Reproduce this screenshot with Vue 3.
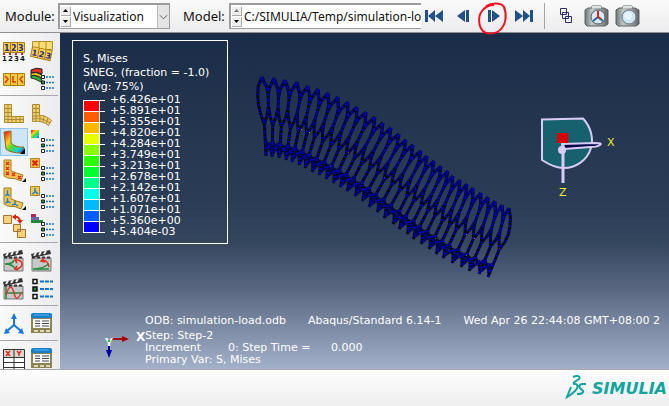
<script setup>
import { ref } from 'vue'

const moduleName = ref('Visualization')
const model = ref('C:/SIMULIA/Temp/simulation-load.odb')

const bands = [
  '#ff0000', '#ff5d00', '#ffb900', '#e8ff00', '#8bff00', '#2eff00',
  '#00ff2e', '#00ff8b', '#00ffe8', '#00b9ff', '#005dff', '#0000ff',
]
const levels = [
  '+6.426e+01', '+5.891e+01', '+5.355e+01', '+4.820e+01', '+4.284e+01',
  '+3.749e+01', '+3.213e+01', '+2.678e+01', '+2.142e+01', '+1.607e+01',
  '+1.071e+01', '+5.360e+00', '+5.404e-03',
]

const groups = [
  [
    ['plot-labels', 'Element labels'], ['plot-labels-def', 'Deformed labels'],
    ['plot-symbols', 'Orientation labels'], ['contour-layers', 'Ply stack options'],
  ],
  [
    ['undeformed', 'Plot undeformed shape'], ['deformed', 'Plot deformed shape'],
    ['contours', 'Plot contours'], ['contour-options', 'Contour options'],
    ['symbols', 'Plot symbols'], ['symbol-options', 'Symbol options'],
    ['orient', 'Plot material orientations'], ['orient-options', 'Orientation options'],
    ['multi', 'Allow multiple plot states'], ['superimpose', 'Superimpose options'],
  ],
  [
    ['anim-scale', 'Animate scale factor'], ['anim-time', 'Animate time history'],
    ['anim-harmonic', 'Animate harmonic'], ['anim-options', 'Animation options'],
  ],
  [['csys', 'Create coordinate system'], ['csys-manager', 'Coordinate system manager']],
  [['xy', 'Create XY data'], ['xy-manager', 'XY data manager']],
]

/* Crown and foot of every strut ring, in canvas pixels. */
const crown = [
  [262, 77], [274, 78], [285, 80], [297, 82], [308, 86], [318, 89], [328, 93], [338, 97],
  [348, 102], [357, 107], [366, 112], [375, 117], [383, 123], [391, 128], [399, 134],
  [406, 140], [413, 145], [421, 151], [427, 156], [434, 161], [441, 166], [448, 171],
  [453, 176], [460, 180], [467, 184], [473, 188], [481, 193], [488, 197], [495, 201],
  [502, 205], [509, 208],
]
const foot = [
  [266, 156], [272, 157], [279, 158], [286, 160], [292, 162], [299, 165], [305, 168],
  [312, 172], [319, 175], [326, 179], [333, 183], [340, 187], [347, 191], [355, 196],
  [362, 201], [369, 207], [377, 212], [384, 218], [393, 224], [399, 229], [407, 234],
  [413, 239], [421, 244], [429, 249], [436, 254], [443, 258], [452, 263], [461, 267],
  [469, 271], [479, 274], [488, 277],
]
const last = crown.length - 1

function along(list, u) {
  const i = Math.max(0, Math.min(last - 1, Math.floor(u)))
  const t = u - i
  return [0, 1].map((k) => list[i][k] + (list[i + 1][k] - list[i][k]) * t)
}
function at(u, s) {
  const a = along(crown, u)
  const b = along(foot, u)
  const bulge = 3 * Math.sin(Math.PI * s) * Math.pow(Math.max(u, 0) / last, 6)
  const x = a[0] + (b[0] - a[0]) * s + bulge - 60
  const y = a[1] + (b[1] - a[1]) * s - 33
  return `${x.toFixed(1)} ${y.toFixed(1)}`
}
/* Honeycomb: a tall leaf under each crown, a straight strut below it, zigzags at the foot. */
const leaf = [[0, 0], [0.38, 0.12], [0.5, 0.24], [0.5, 0.36], [0.34, 0.48], [0, 0.6]]
const struts = crown
  .map((_, i) => [-1, 1]
    .map((side) => 'M' + leaf.map(([w, s]) => at(i + side * w, s)).join('L'))
    .join('') + `L${at(i, 1)}`)
  .join('')
const links = crown
  .slice(0, -1)
  .map((_, i) => `M${at(i, 0.02)}L${at(i + 0.5, 0.16)}L${at(i + 1, 0.02)}M${at(i, 0.97)}L${at(i + 0.5, 0.84)}L${at(i + 1, 0.97)}M${at(i, 0.8)}L${at(i + 0.5, 0.88)}L${at(i + 1, 0.8)}`)
  .join('')
const mesh = struts + links
const specks = [
  [208, 89, '#0a8a70'], [216, 90, '#0a7a3a'], [241, 96, '#b88a20'], [249, 99, '#b0a030'],
  [288, 119, '#a04020'], [270, 132, '#0a7a20'], [324, 144, '#108020'], [364, 174, '#108a20'],
  [378, 184, '#208a20'], [393, 192, '#309020'], [406, 201, '#10b0b0'], [414, 205, '#c08010'],
  [375, 205, '#20a020'], [406, 222, '#30a020'], [439, 215, '#a02020'],
]
</script>

<template>
  <div class="app">
    <svg class="defs" aria-hidden="true">
      <defs>
        <linearGradient id="rainbow" x1="0" y1="0" x2="1" y2="1">
          <stop offset="0.05" stop-color="#f02010" />
          <stop offset="0.35" stop-color="#ffd020" />
          <stop offset="0.55" stop-color="#50d830" />
          <stop offset="0.78" stop-color="#20d0d0" />
          <stop offset="1" stop-color="#1050f0" />
        </linearGradient>
        <linearGradient id="camera" x1="0" y1="0" x2="1" y2="0">
          <stop offset="0" stop-color="#6f7678" />
          <stop offset="0.3" stop-color="#c2c7c8" />
          <stop offset="0.7" stop-color="#9aa0a2" />
          <stop offset="1" stop-color="#5b6264" />
        </linearGradient>
        <g id="opts">
          <g stroke="#222" fill="#fff"><path d="M11.500 8.500h3v3h-3zM11.500 19.500h3v3h-3z" /><path d="M11.500 14h3v3h-3z" fill="#2a9a3a" /></g>
          <path d="M16 10h8M16 15.500h8M16 21h8" stroke="#1878d8" stroke-width="1.500" stroke-dasharray="2 1" />
        </g>
        <g id="clap">
          <path d="M2 9h19v13H2z" fill="#c6c9c9" stroke="#777" />
          <path d="M1 5l19-4 1 4-19 4z" fill="#333" />
          <path d="M4 7l2-3M9 6l2-3M14 5l2-3" stroke="#eee" stroke-width="2" />
          <path d="M2 8.500h19" stroke="#333" stroke-width="2" stroke-dasharray="3 2" />
        </g>
        <g id="elbow">
          <path d="M2 2h7v11q5 2 12 4l-2 6q-5-3-13-3l-4-2z" fill="#f7c850" stroke="#a07818" />
        </g>
        <g id="table">
          <path d="M1 3q0-1 1-1h19q1 0 1 1v18H1z" fill="#8c8355" />
          <path d="M1 6V3q0-2 2-2h17q2 0 2 2v3z" fill="#1780cc" />
          <path d="M4 3h15" stroke="#5bb0e8" />
          <path d="M3 7h17v9H3z" fill="#fff" />
          <path d="M5 9h5M12 9h7M5 11.500h5M12 11.500h7M5 14h5M12 14h7" stroke="#444" />
          <path d="M4 18h4v2H4zM10 18h4v2h-4zM16 18h4v2h-4z" fill="#ddd8b8" />
        </g>
        <g id="cam">
          <path d="M4 3h4v-2h9v2h3l4 2v14l-3 2H3l-2-2V5z" fill="url(#camera)" stroke="#5b6264" />
          <path d="M8 2h9" stroke="#dfe3e4" stroke-width="2" />
        </g>
      </defs>
    </svg>

    <header class="toolbar">
      <label class="caption" for="module">Module:</label>
      <div class="combo module">
        <span class="spin">
          <button type="button" aria-label="Previous module"><svg viewBox="0 0 7 4"><path d="M0 4L3.500 0 7 4z" /></svg></button>
          <button type="button" aria-label="Next module"><svg viewBox="0 0 7 4"><path d="M0 0h7L3.500 4z" /></svg></button>
        </span>
        <select id="module" v-model="moduleName"><option>Visualization</option></select>
        <span class="drop"><svg viewBox="0 0 10 6"><path d="M1 1l4 4 4-4" fill="none" stroke="#555" /></svg></span>
      </div>
      <label class="caption second" for="model">Model:</label>
      <div class="combo model">
        <span class="spin">
          <button type="button" aria-label="Previous model"><svg viewBox="0 0 7 4"><path d="M0 4L3.500 0 7 4z" fill="#777" /></svg></button>
          <button type="button" aria-label="Next model"><svg viewBox="0 0 7 4"><path d="M0 0h7L3.500 4z" /></svg></button>
        </span>
        <select id="model" v-model="model"><option>C:/SIMULIA/Temp/simulation-load.odb</option></select>
      </div>

      <nav class="playback" aria-label="Frames">
        <button type="button" aria-label="First frame"><svg width="18" height="12"><path d="M0 0h3v12H0zM3 6l7-6v12zM10 6l8-6v12z" /></svg></button>
        <button type="button" aria-label="Previous frame"><svg width="18" height="12"><path d="M2 6l8-6v12zM11 0h3v12h-3z" /></svg></button>
        <button type="button" class="marked" aria-label="Next frame">
          <svg width="18" height="12"><path d="M3 0h3v12H3zM7 0l8 6-8 6z" /></svg>
          <svg class="ring" width="32" height="36" viewBox="0 0 32 36"><path d="M9 5C14 2 24 1 27 6c3 7 2 17-3 22-4 5-14 6-18 2C1 25 1 15 5 10c3-4 7-6 12-6" /></svg>
        </button>
        <button type="button" aria-label="Last frame"><svg width="18" height="12"><path d="M0 0l8 6-8 6zM8 0l7 6-7 6zM15 0h3v12h-3z" /></svg></button>
      </nav>

      <div class="tools">
        <button type="button" aria-label="Overlay viewports">
          <svg width="12" height="16" fill="none" stroke="#2b2b6e"><path d="M.5.5h6v6h-6zM2.500 4.500h6v6h-6zM5.500 8.500h6v6h-6z" /></svg>
        </button>
        <button type="button" aria-label="Save view">
          <svg width="25" height="22"><use href="#cam" /><circle cx="14" cy="12" r="7" fill="#dce9f4" stroke="#4e5a62" /><path d="M14 12l-5 4M14 12l5 4" stroke="#2864b0" stroke-width="2" /><path d="M14 6v6l3 2" fill="none" stroke="#c82828" stroke-width="2" /></svg>
        </button>
        <button type="button" aria-label="Snapshot">
          <svg width="25" height="22"><use href="#cam" /><circle cx="14" cy="12" r="7" fill="#cfe4f6" stroke="#6a767c" /><circle cx="13" cy="11" r="4" fill="#e6f3fd" /></svg>
        </button>
      </div>
    </header>

    <div class="work">
      <aside class="toolbox">
        <div v-for="(group, g) in groups" :key="g" class="group">
          <button v-for="[icon, title] in group" :key="icon" type="button" :aria-label="title" :class="{ active: icon === 'contours' }">
            <svg width="24" height="24" fill="none">
              <template v-if="icon === 'plot-labels'">
                <path d="M1.500 3.500h21v10h-21zM8.500 3.500v10M15.500 3.500v10" fill="#f9d04c" stroke="#a87c18" />
                <g class="num"><text x="2" y="12">1</text><text x="9" y="12">2</text><text x="16" y="12">3</text></g>
                <path d="M1 15h22" stroke="#e02020" stroke-dasharray="2 4" stroke-width="2" />
                <g class="tiny"><text x="0" y="22">1</text><text x="6" y="22">2</text><text x="12" y="22">3</text><text x="18" y="22">4</text></g>
              </template>
              <template v-else-if="icon === 'plot-labels-def'">
                <path d="M2.500 2.500h20v8h-20zM9 2v9M16 2v9" fill="#f7dc70" stroke="#b09028" />
                <g transform="rotate(12 2 8)"><path d="M2.500 7.500h20v10h-20zM9.500 7.500v10M16.500 7.500v10" fill="#f9d04c" stroke="#a87c18" /><g class="num"><text x="3" y="16">1</text><text x="10" y="16">2</text><text x="17" y="16">3</text></g></g>
              </template>
              <template v-else-if="icon === 'plot-symbols'">
                <path d="M1.500 6.500h21v12h-21zM8.500 6.500v12M15.500 6.500v12" fill="#f9cc40" stroke="#a87c18" />
                <path d="M3 9l3 3-3 4M11 9v6h3M21 9l-3 3 3 4" stroke="#d83818" stroke-width="1.500" />
              </template>
              <template v-else-if="icon === 'contour-layers'">
                <path d="M1 9q5-2 11 4l-1 2q-7-4-10-4z" fill="#38b838" stroke="#222" />
                <path d="M1 6q5-2 11 2v3q-7-4-11-2z" fill="#f0c820" stroke="#222" />
                <path d="M1 3q5-3 11-1v5q-6-3-11-1z" fill="#e03020" stroke="#222" />
                <use href="#opts" />
              </template>
              <path v-else-if="icon === 'undeformed'" d="M2.500 2.500h7v12h12v6h-19zM6 3v17M3 6.500h6M3 10.500h6M3 14.500h6M3 17.500h18M10 15v5M14 15v5M18 15v5" fill="#f3d068" stroke="#a88a38" />
              <path v-else-if="icon === 'deformed'" d="M2.500 2.500h7v11q5-1 12 5l-3 5q-5-5-16-4zM6 3v16M3 6.500h6M3 10.500h6M3 14h7M3 17q9-2 17 4M10 14v5M14 14l-1 6M18 16l-2 6" fill="#f3d068" stroke="#a88a38" />
              <g v-else-if="icon === 'contours'">
                <path d="M2 2l7-1v12q5 5 13 4l-2 6Q8 23 4 19z" fill="url(#rainbow)" stroke="#8a6a20" />
                <path d="M23 18v6h-5z" fill="#111" />
              </g>
              <g v-else-if="icon === 'contour-options'"><path d="M1 0h8v8H1z" fill="url(#rainbow)" /><use href="#opts" /></g>
              <g v-else-if="icon === 'symbols'">
                <use href="#elbow" />
                <path d="M4 4l3 3M7 4L4 7M4 9l3 3M7 9l-3 3M4 14l3 3M7 14l-3 3M10 15l3 3M13 15l-3 3M16 18l3 3M19 18l-3 3" stroke="#e02818" stroke-width="1.500" />
                <path d="M24 20v4h-4z" fill="#111" />
              </g>
              <g v-else-if="icon === 'symbol-options'"><path d="M.5.5h9v9h-9z" fill="#f7c040" stroke="#b08428" /><path d="M2.500 2.500l5 5M7.500 2.500l-5 5" stroke="#e02010" stroke-width="2" /><use href="#opts" /></g>
              <g v-else-if="icon === 'orient'">
                <use href="#elbow" />
                <path d="M5.500 4v4l-2 2M5.500 8l2 2M5.500 12v4l-2 1M5.500 15l3 2M13 15v3l-3 1M13 18l3 2" stroke="#1880d8" stroke-width="1.500" />
                <path d="M24 20v4h-4z" fill="#111" />
              </g>
              <g v-else-if="icon === 'orient-options'"><path d="M.5.500h9v9h-9z" fill="#f7c850" stroke="#b08428" /><path d="M5 2v4L2 8M5 5l3 3" stroke="#1880d8" stroke-width="1.500" /><use href="#opts" /></g>
              <g v-else-if="icon === 'multi'">
                <path d="M1.500 1.500h8v8h-8zM11.500 10.500h7v7h-7zM15.500 15.500h8v8h-8z" fill="#fbd27a" stroke="#9a7430" />
                <path d="M12 3q5-1 6 4" stroke="#e02010" stroke-width="2" /><path d="M10 3l4-3v6zM15 6h6l-3 4z" fill="#e02010" />
              </g>
              <g v-else-if="icon === 'superimpose'">
                <path d="M1 0h5v3H1z" fill="#c02058" /><path d="M1 3h8v3H1z" fill="#6868a8" /><path d="M1 6h12v3H1z" fill="#208838" /><use href="#opts" />
              </g>
              <g v-else-if="icon === 'anim-scale'"><use href="#clap" /><path d="M3 15q8 0 9-4M3 15q8 0 10 5" stroke="#208838" stroke-width="1.500" /><path d="M14 11q6 0 6 4t-6 5M15 9l-2 2 2 3M15 17l-2 3 3 1" stroke="#e03020" stroke-width="1.500" /></g>
              <g v-else-if="icon === 'anim-time'"><use href="#clap" /><path d="M3 20q9 0 16-5M3 20h16" stroke="#208838" stroke-width="1.500" /><path d="M11 12q7-2 8 6M14 9l-3 3 4 1" stroke="#e03020" stroke-width="1.500" /></g>
              <g v-else-if="icon === 'anim-harmonic'"><use href="#clap" /><path d="M4 10v12M3 16h18" stroke="#208838" stroke-width="1.500" /><path d="M4 18c3-10 6-10 8-2s4 6 8-1" stroke="#d83830" stroke-width="1.500" /></g>
              <g v-else-if="icon === 'anim-options'">
                <path d="M3 2.500h4v4H3zM3 17.500h4v4H3z" fill="#fff" stroke="#111" stroke-width="1.500" /><path d="M3 10h4v4H3z" fill="#208a28" stroke="#111" stroke-width="1.500" />
                <path d="M10 4.500h13M10 12h13M10 19.500h13" stroke="#1070e0" stroke-width="2" stroke-dasharray="4 1" />
              </g>
              <g v-else-if="icon === 'csys'"><path d="M12 13V5M12 13l-7 6M12 13l7 6" stroke="#1878e0" stroke-width="2" /><path d="M12 1l3 6H9zM2 22l2-6 4 5zM22 22l-6-1 4-5z" fill="#1878e0" /></g>
              <g v-else-if="icon === 'xy'">
                <path d="M1.500 2.500h21V24h-21z" fill="#fff" stroke="#333" /><path d="M2 3h20v7H2z" fill="#d8d8d0" />
                <path d="M12 2v22M1 10.500h22M1 15.500h22M1 20.500h22" stroke="#333" />
                <path d="M4 4l4 5M8 4L4 9M15 4l2 2.500L19 4M17 6v3" stroke="#e02820" stroke-width="1.500" />
              </g>
              <use v-else href="#table" />
            </svg>
          </button>
        </div>
      </aside>

      <main class="viewport">
        <svg class="model-view" width="609" height="336" fill="none">
          <path :d="mesh" stroke="#06061c" stroke-width="3" stroke-linejoin="round" />
          <path :d="mesh" stroke="#0000b4" stroke-width="2" stroke-dasharray="2 1 1 2 2 3" />
          <rect v-for="([x, y, c], i) in specks" :key="i" :x="x" :y="y" width="1" height="1" :fill="c" />
        </svg>

        <svg class="compass" width="76" height="86" fill="none">
          <path d="M2 7.500L43 6.500C50 14 54 25 51 36C47 49 35 56 24 56C15 56 8 52 2 48Z" fill="#17616f" stroke="#d8ccf4" stroke-width="2" />
          <path d="M22 32L55 31Q63 31 60 33Q57 35 50 35L24 37Z" fill="#04044a" stroke="#d8ccf4" stroke-width="2" stroke-linejoin="round" />
          <path d="M23 31v40" stroke="#d8ccf4" stroke-width="3" />
          <path d="M17 21h11v10H17z" fill="#d60000" />
          <circle cx="22" cy="38" r="4" fill="#d8ccf4" />
          <text x="67" y="34">X</text><text x="19" y="84">Z</text>
        </svg>

        <section class="legend">
          <p>S, Mises</p>
          <p>SNEG, (fraction = -1.0)</p>
          <p>(Avg: 75%)</p>
          <div class="scale">
            <div class="bands"><span v-for="c in bands" :key="c" :style="{ '--band': c }"></span></div>
            <ul><li v-for="l in levels" :key="l">{{ l }}</li></ul>
          </div>
        </section>

        <section class="status">
          <svg class="triad" width="50" height="30" fill="none">
            <path d="M7 10h14" stroke="#a01010" stroke-width="2" /><path d="M19 7l7 3-7 3z" fill="#a80000" />
            <path d="M6 15v8" stroke="#0000a0" stroke-width="2" /><path d="M3 21h6l-3 8z" fill="#0000a0" />
            <text class="y" x="2" y="17">Y</text>
            <path d="M5 11h2v2H5z" fill="#10c030" />
            <text x="33" y="12">X</text>
          </svg>
          <div class="lines">
            <p class="source"><span>ODB: simulation-load.odb</span><span>Abaqus/Standard 6.14-1</span><span>Wed Apr 26 22:44:08 GMT+08:00 2</span></p>
            <p>Step: Step-2</p>
            <p class="inc"><span>Increment</span><span>0: Step Time =</span><span>0.000</span></p>
            <p>Primary Var: S, Mises</p>
          </div>
        </section>
      </main>
    </div>

    <footer class="brand">
      <svg width="22" height="24" viewBox="0 0 22 24" fill="none" stroke="#12a4a0" stroke-width="2">
        <path d="M8 2C12 0 16 1 14 4L8 8M8 9C13 8 14 12 10 16Q6 20 2 22L6 12M21 9H17Q13 10 15 13L18 16Q19 19 12 19" />
      </svg>
      <span>SIMULIA</span>
    </footer>
  </div>
</template>

<style>
body { background: #f4f4f5; }
</style>

<style scoped>
.app { display: flex; flex-direction: column; height: 100vh; overflow: hidden; font: 13px/20px "Noto Sans", sans-serif; color: #111; }
.defs { position: absolute; width: 0; height: 0; }
button { display: flex; align-items: center; justify-content: center; border: 0; padding: 0; background: none; }
p, ul { margin: 0; padding: 0; list-style: none; }

.toolbar { display: flex; align-items: center; flex: none; height: 33px; box-sizing: border-box; padding-left: 5px; background: linear-gradient(#fafafa, #ececee); border-bottom: 1px solid #8e8e92; }
.caption { flex: none; width: 53px; }
.caption.second { width: 46px; margin-left: 13px; }
.combo { display: flex; align-items: center; flex: none; box-sizing: border-box; height: 26px; border: 2px solid #9c9c9e; border-width: 2px 1px 1px 2px; background: #fff; overflow: hidden; }
.combo.module { width: 112px; }
.combo.model { width: 192px; border-right: 0; }
.combo select { flex: 1; min-width: 0; height: 22px; appearance: none; border: 0; padding: 0 0 0 2px; background: none; font: 12px/20px "Noto Sans", sans-serif; color: #111; text-overflow: clip; }
.spin { display: flex; flex-direction: column; flex: none; gap: 1px; width: 10px; height: 20px; margin-left: 1px; }
.spin button { flex: 1; box-sizing: border-box; background: #eee; border: 1px solid #aaa; border-width: 0 1px 1px 0; }
.spin svg { width: 5px; height: 3px; }
.drop { display: flex; align-items: center; justify-content: center; width: 11px; height: 23px; background: #e4e4e4; border-left: 1px solid #bbb; pointer-events: none; }
.drop svg { width: 9px; height: 6px; }
.playback { display: flex; gap: 12px; margin-left: 4px; }
.playback svg { fill: #245089; }
.playback button { position: relative; width: 18px; height: 24px; }
.playback .ring { position: absolute; left: -8px; top: -3px; fill: none; stroke: #f01020; stroke-width: 2; pointer-events: none; z-index: 2; }
.tools { display: flex; align-items: center; gap: 6px; height: 26px; margin-left: 11px; padding-left: 15px; border-left: 1px solid #a4a4a8; }
.tools button:first-child { margin-right: 6px; }

.work { display: flex; flex: 1; min-height: 0; }
.toolbox { flex: none; width: 60px; box-sizing: border-box; padding: 0 2px 0 0; overflow: hidden; background: linear-gradient(90deg, #fafafa, #ececee); }
.group { display: grid; grid-template-columns: 28px 28px; grid-auto-rows: 28px; padding: 4px 0 2px; border-bottom: 1px solid #a8a8ac; }
.group button.active { background: #cfe6fa; outline: 1px solid #90c4f0; outline-offset: -1px; }
.num text { font: bold 8px "DejaVu Sans", sans-serif; fill: #28288c; }
.tiny text { font: bold 7px "DejaVu Sans", sans-serif; fill: #111; }

.viewport { position: relative; display: flex; flex-direction: column; justify-content: space-between; align-items: flex-start; flex: 1; min-width: 0; box-sizing: border-box; padding: 7px 0 3px 12px; overflow: hidden; color: #fff; font: 11px/12px "DejaVu Sans", sans-serif; background: linear-gradient(#1b2c48, #2b3d56 50%, #34455e 62%, #586680 76%, #a2b0ca); }
.model-view { position: absolute; left: 0; top: 0; }
.compass { position: absolute; left: 480px; top: 79px; }
.compass text { fill: #f0f020; font-size: 11px; }
.legend { position: relative; width: 156px; box-sizing: border-box; padding: 11px 0 6px 10px; border: 1px solid #fff; line-height: 14px; white-space: nowrap; }
.scale { display: flex; gap: 5px; }
.scale li { height: 11px; line-height: 11px; }
.bands { width: 22px; padding-top: 6px; }
.bands span { display: block; height: 11px; box-sizing: border-box; border-top: 1px solid #fff; background: linear-gradient(90deg, #fff 1px, var(--band) 1px, var(--band) 16px, #fff 16px, #fff 17px, transparent 17px); }
.bands::after { content: ""; display: block; height: 1px; background: #fff; }

.status { position: relative; display: flex; align-items: center; padding-left: 31px; white-space: nowrap; }
.triad { flex: none; width: 42px; margin-top: 6px; overflow: visible; }
.triad text { fill: #fff; font: bold 12px "DejaVu Sans", sans-serif; }
.triad .y { font-size: 11px; }
.source { display: flex; gap: 22px; margin-bottom: 3px; }
.inc { display: flex; }
.inc span:first-child { width: 83px; }
.inc span:nth-child(2) { width: 103px; }

.brand { display: flex; align-items: center; justify-content: flex-end; gap: 5px; flex: none; height: 37px; box-sizing: border-box; padding: 0 2px 2px 0; border-top: 1px solid #a8a8aa; background: linear-gradient(#fdfdfd, #eeeeef); color: #12a4a0; font: italic bold 16px/20px "DejaVu Sans", sans-serif; }
.brand span { padding-top: 4px; }
</style>
